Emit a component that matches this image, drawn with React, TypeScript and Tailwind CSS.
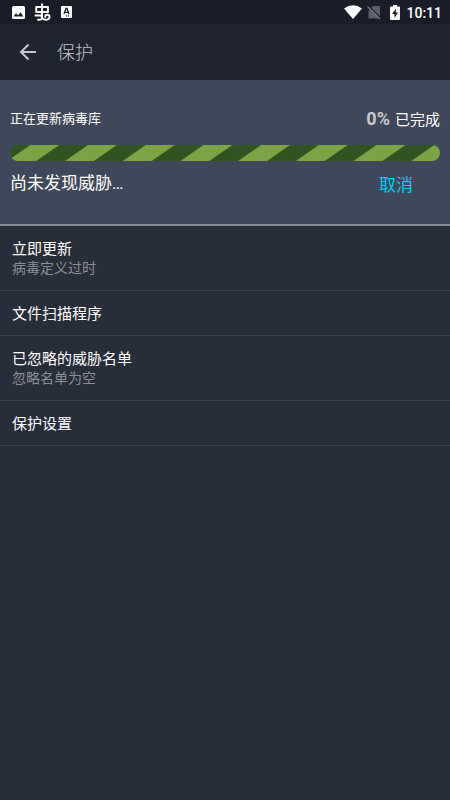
import React from "react";

type Item = { title: string; detail?: string };

const items: Item[] = [
  { title: "立即更新", detail: "病毒定义过时" },
  { title: "文件扫描程序" },
  { title: "已忽略的威胁名单", detail: "忽略名单为空" },
  { title: "保护设置" },
];

function StatusBar() {
  return (
    <div className="flex h-6 items-center justify-between bg-[#1a1d28] pr-2 pl-[11px] text-white">
      <div className="flex items-center gap-2">
        <svg width="15" height="15" viewBox="0 0 15 15" aria-hidden="true">
          <path
            fill="currentColor"
            fillRule="evenodd"
            d="M2.500 1h10A1.500 1.500 0 0 1 14 2.500v10a1.500 1.500 0 0 1-1.500 1.500h-10A1.500 1.500 0 0 1 1 12.500v-10A1.500 1.500 0 0 1 2.500 1ZM2.500 11.500h10L9.500 7.200 7 10.200 5 8.200Z"
          />
        </svg>
        <svg width="17" height="18" viewBox="0 0 17 18" fill="none" stroke="currentColor" strokeWidth="1.900" strokeLinecap="round" strokeLinejoin="round" aria-hidden="true">
          <path d="M2.200 4h11.800v5H2.200ZM8 1.200v11.300M1.500 12.500H6q2 0 2 2 0 2.200-2.500 2.200H4M8 9v4q0 3.700 3.500 3.700 4 0 4-2.700 0-2.200-2.200-2.200-2 0-2 1.900" />
        </svg>
        <svg width="15" height="14" viewBox="0 0 15 14" aria-hidden="true">
          <rect x="2" y="1" width="11" height="12" rx="1" fill="currentColor" />
          <path d="m5 9 2-5.500h1L10 9M6 7.300h3M7 10.800h1M9 10.800h1" fill="none" stroke="#1a1d28" strokeWidth="1.300" />
        </svg>
      </div>
      <div className="flex items-center">
        <svg width="18" height="14" viewBox="0 0 18 14" aria-hidden="true">
          <path fill="currentColor" d="M0 3.500Q9-3 18 3.500L9 14Z" />
        </svg>
        <svg className="ml-1" width="16" height="16" viewBox="0 0 16 16" aria-hidden="true">
          <path fill="#5b5e66" d="M7 2h7v12.500H2.500V7Z" />
          <path d="m2 1.500 13 13" stroke="#1a1d28" strokeWidth="1.500" />
          <path d="m1.500 2.500 12.500 12.500" stroke="#777a82" strokeWidth="1.200" />
        </svg>
        <svg className="ml-2" width="10" height="15" viewBox="0 0 10 15" aria-hidden="true">
          <path fill="currentColor" d="M3 0h4v1.500h2q1 0 1 1V14q0 1-1 1H1q-1 0-1-1V2.500q0-1 1-1h2Z" />
          <path fill="#1a1d28" d="M6 3.500 2 9h2.500v4L8 7.500H5.700Z" />
        </svg>
        <span className="ml-1.5 pt-px text-sm leading-6 font-medium">10:11</span>
      </div>
    </div>
  );
}

function StripedBar() {
  return (
    <div role="progressbar" aria-label="正在更新病毒库" aria-valuenow={0} className="h-4 overflow-hidden rounded-full">
      <svg className="block h-4 w-full" aria-hidden="true">
        <defs>
          <pattern id="stripes" width="57.700" height="16" patternUnits="userSpaceOnUse" x="-8.500">
            <rect width="58" height="16" fill="#305421" />
            <path d="M28.850 0h28.850L34.700 16H5.850Z" fill="#7ea346" />
          </pattern>
        </defs>
        <rect width="100%" height="16" fill="url(#stripes)" />
      </svg>
    </div>
  );
}

export default function App() {
  return (
    <div className="min-h-screen bg-[#282d3a] font-[Roboto,'Noto_Sans_CJK_SC',sans-serif]">
      <StatusBar />
      <header className="flex h-14 items-center bg-[#1f2430] px-4 text-[#c3c6ca]">
        <button type="button" aria-label="返回" className="flex size-6 items-center justify-center">
          <svg width="24" height="24" viewBox="0 0 24 24" fill="none" stroke="currentColor" strokeWidth="2" aria-hidden="true">
            <path d="M20 12H5.500M12.500 4.500 5 12l7.500 7.500" />
          </svg>
        </button>
        <h1 className="ml-[17px] pt-0.5 text-lg font-light">保护</h1>
      </header>

      <section className="border-b-2 border-[#858b97] bg-[#3f475a] px-[10px] pt-6 pb-[19px] text-white">
        <div className="flex h-7 items-center justify-between">
          <span className="pt-0.5 text-[13px]">正在更新病毒库</span>
          <span className="flex items-baseline gap-[5px] text-[15px]">
            <b className="text-[18px] text-[#c6c9d0]">0%</b>
            已完成
          </span>
        </div>
        <div className="pt-[13px]">
          <StripedBar />
        </div>
        <div className="flex h-11 items-center justify-between pr-[27px] text-[17px]">
          <span className="pt-0.5">尚未发现威胁…</span>
          <button type="button" className="pt-1.5 text-[#00d2f5]">取消</button>
        </div>
      </section>

      <ul>
        {items.map((item) => (
          <li key={item.title} className="border-b border-[#3b404c]">
            <button type="button" className="block w-full px-3 pt-[13px] pb-[11px] text-left">
              <span className="block text-[15px] leading-5 text-white">{item.title}</span>
              {item.detail && <span className="mb-0.5 block text-sm leading-[18px] text-[#8b8f97]">{item.detail}</span>}
            </button>
          </li>
        ))}
      </ul>
    </div>
  );
}
